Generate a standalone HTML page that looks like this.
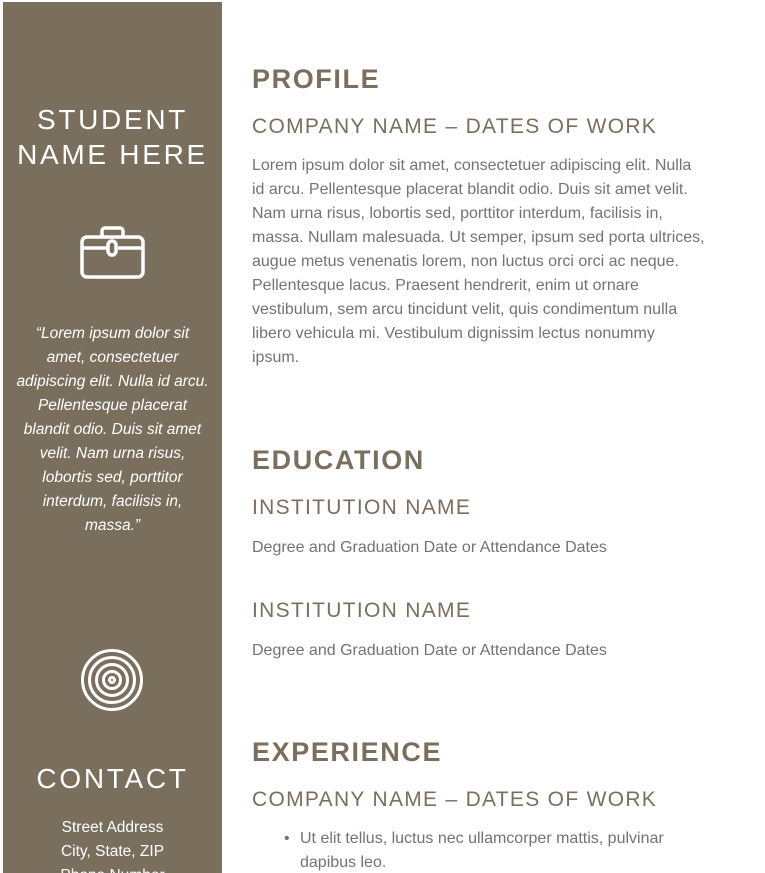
<!DOCTYPE html>
<html><head><meta charset="utf-8">
<style>
html,body{margin:0;padding:0;background:#fff;width:765px;height:873px;overflow:hidden;position:relative;font-family:"Liberation Sans",Arial,sans-serif}
.side{position:absolute;left:3px;top:2px;width:219px;height:871px;background:#7a6f5c}
.c{position:absolute;left:3px;width:219px;text-align:center;color:#fff;white-space:nowrap}
.big{font-size:28px;letter-spacing:2.7px;line-height:35px}
.q{font-style:italic;font-size:15.5px;line-height:24px}
.a{font-size:15.5px;line-height:24px}
.m{position:absolute;left:252px;white-space:nowrap}
.h1{font-size:27px;font-weight:bold;letter-spacing:1.6px;color:#7a6f5c}
.h2{font-size:21px;letter-spacing:1.3px;color:#7a6f5c}
.p{font-size:16px;line-height:24px;color:#737373}
</style></head><body>
<div class="side"></div>
<div class="c big" style="top:102px">STUDENT<br>NAME HERE</div>
<svg style="position:absolute;left:80px;top:226px" width="66" height="54" viewBox="0 0 66 54" fill="none" stroke="#fff" stroke-width="3.5">
<rect x="2" y="11" width="61" height="40" rx="5"/>
<path d="M22 11V5a3 3 0 0 1 3-3h15a3 3 0 0 1 3 3v6"/>
<path d="M2 22h25M38 22h25"/>
<rect x="28" y="15" width="8" height="14" rx="4"/>
</svg>
<div class="c q" style="top:322px">“Lorem ipsum dolor sit<br>amet, consectetuer<br>adipiscing elit. Nulla id arcu.<br>Pellentesque placerat<br>blandit odio. Duis sit amet<br>velit. Nam urna risus,<br>lobortis sed, porttitor<br>interdum, facilisis in,<br>massa.”</div>
<svg style="position:absolute;left:80px;top:648px" width="64" height="64" viewBox="0 0 64 64" fill="none" stroke="#fff" stroke-width="3">
<circle cx="32" cy="32" r="29.5"/><circle cx="32" cy="32" r="22.5"/><circle cx="32" cy="32" r="15.5"/><circle cx="32" cy="32" r="8.5"/><circle cx="32" cy="32" r="2.5"/>
</svg>
<div class="c big" style="top:761px">CONTACT</div>
<div class="c a" style="top:816px">Street Address<br>City, State, ZIP<br>Phone Number</div>

<div class="m h1" style="top:64px">PROFILE</div>
<div class="m h2" style="top:115px">COMPANY NAME – DATES OF WORK</div>
<div class="m p" style="top:154px">Lorem ipsum dolor sit amet, consectetuer adipiscing elit. Nulla<br>id arcu. Pellentesque placerat blandit odio. Duis sit amet velit.<br>Nam urna risus, lobortis sed, porttitor interdum, facilisis in,<br>massa. Nullam malesuada. Ut semper, ipsum sed porta ultrices,<br>augue metus venenatis lorem, non luctus orci orci ac neque.<br>Pellentesque lacus. Praesent hendrerit, enim ut ornare<br>vestibulum, sem arcu tincidunt velit, quis condimentum nulla<br>libero vehicula mi. Vestibulum dignissim lectus nonummy<br>ipsum.</div>

<div class="m h1" style="top:445px">EDUCATION</div>
<div class="m h2" style="top:496px">INSTITUTION NAME</div>
<div class="m p" style="top:536px">Degree and Graduation Date or Attendance Dates</div>
<div class="m h2" style="top:599px">INSTITUTION NAME</div>
<div class="m p" style="top:639px">Degree and Graduation Date or Attendance Dates</div>

<div class="m h1" style="top:737px">EXPERIENCE</div>
<div class="m h2" style="top:788px">COMPANY NAME – DATES OF WORK</div>
<div class="m p" style="top:827px;left:300px"><span style="position:absolute;left:-16px;top:0">•</span>Ut elit tellus, luctus nec ullamcorper mattis, pulvinar<br>dapibus leo.</div>
</body></html>
